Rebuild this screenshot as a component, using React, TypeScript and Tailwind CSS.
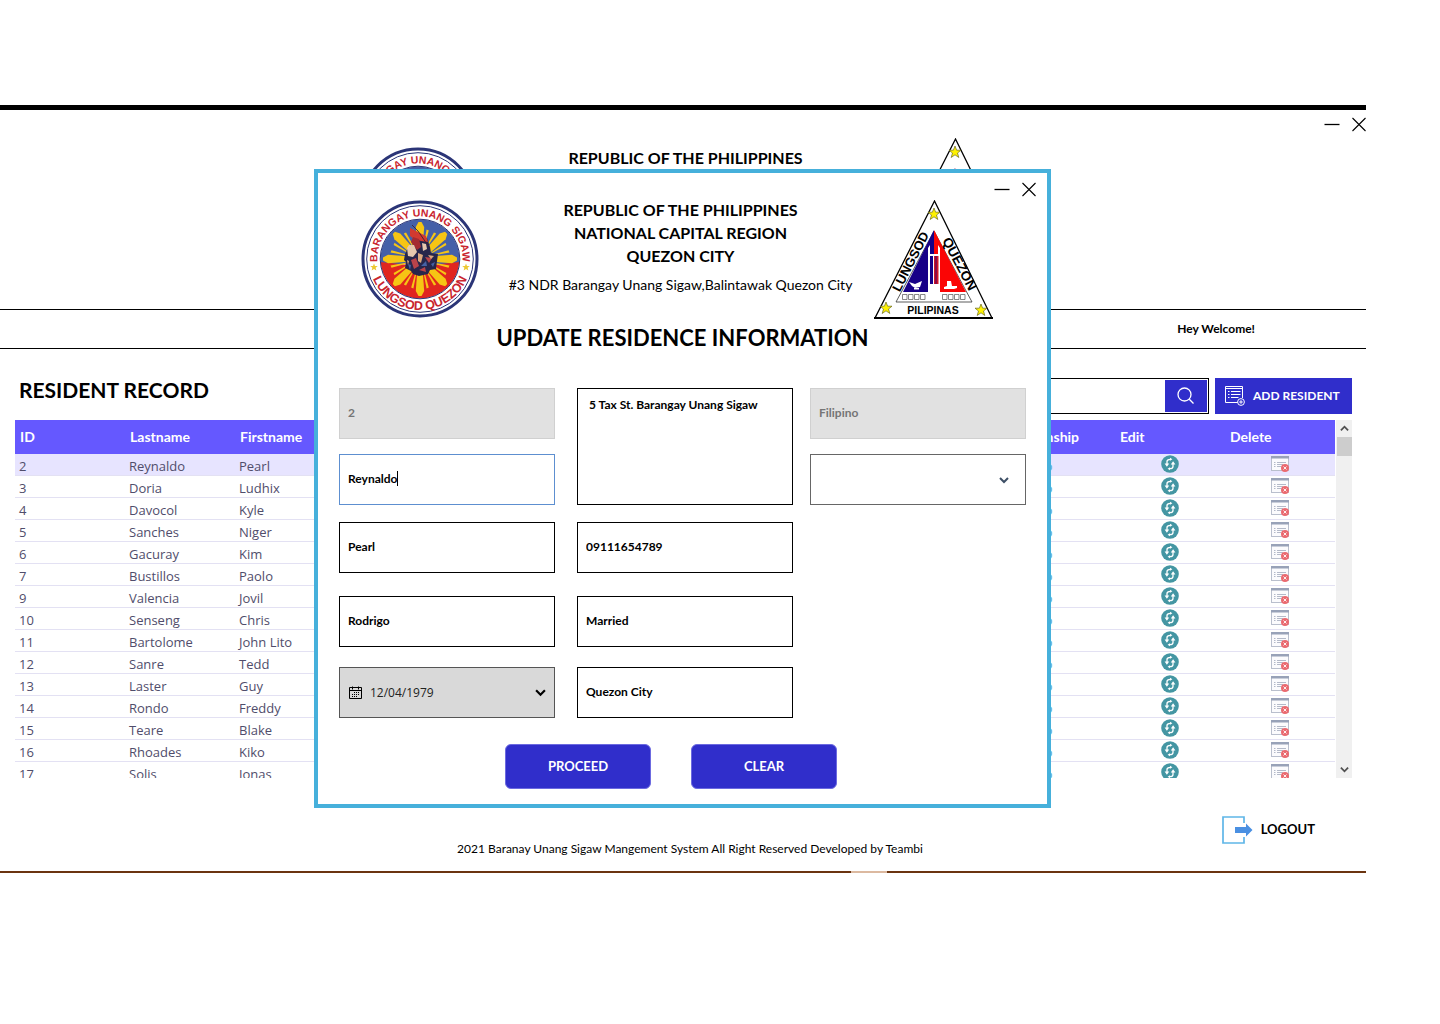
import { useState } from "react";

const residents = [
  ["2", "Reynaldo", "Pearl"],
  ["3", "Doria", "Ludhix"],
  ["4", "Davocol", "Kyle"],
  ["5", "Sanches", "Niger"],
  ["6", "Gacuray", "Kim"],
  ["7", "Bustillos", "Paolo"],
  ["9", "Valencia", "Jovil"],
  ["10", "Senseng", "Chris"],
  ["11", "Bartolome", "John Lito"],
  ["12", "Sanre", "Tedd"],
  ["13", "Laster", "Guy"],
  ["14", "Rondo", "Freddy"],
  ["15", "Teare", "Blake"],
  ["16", "Rhoades", "Kiko"],
  ["17", "Solis", "Jonas"],
];

function BarangaySeal({ id }: { id: string }) {
  const angles = [0, 45, 90, 135, 180, 225, 270, 315];
  return (
    <svg viewBox="0 0 118 118" className="size-[118px] shrink-0" role="img" aria-label="Barangay Unang Sigaw seal">
      <defs>
        <path id={`${id}-top`} d="M16.5 62 A42.6 42.6 0 1 1 101.5 62" />
        <path id={`${id}-bottom`} d="M8 59 A51 51 0 0 0 110 59" />
        <clipPath id={`${id}-clip`}>
          <circle cx="59" cy="59" r="39.5" />
        </clipPath>
      </defs>
      <circle cx="59" cy="59" r="57" fill="#fff" stroke="#2b3577" strokeWidth="3" />
      <circle cx="59" cy="59" r="53.3" fill="none" stroke="#2b3577" strokeWidth="1" />
      <g clipPath={`url(#${id}-clip)`}>
        <rect x="18" y="18" width="82" height="46" fill="#4560a8" />
        <path d="M18 62 L59 66 L100 62 V100 H18Z" fill="#e0251f" />
        {angles.map((a) => (
          <g key={a} transform={`rotate(${a} 59 59)`} fill="#f6c514">
            <path d="M56.5 50 L54.8 27 L57.5 22 H60.5 L63.2 27 L61.5 50Z" />
            <path d="M54.6 46 L50.2 30.5 L52.4 29.5 L55.6 46Z" />
            <path d="M63.4 46 L67.8 30.5 L65.6 29.5 L62.4 46Z" />
          </g>
        ))}
      </g>
      <circle cx="59" cy="59" r="39.8" fill="none" stroke="#2b3577" strokeWidth="1" />
      <path d="M47 48 L44 54 L43 60 L45 62 L44 68 L50 71 L52 74 L58 76 L67 74 L69 70 L75 69 L76 61 L77 54 L70 53 L69 47 L66 38 L58 40Z" fill="#27264b" />
      <path d="M49 28 L55 31 L61 34 L65 36 L67 42 L60 41 L53 39 L49 36Z" fill="#d23a30" />
      <path d="M51 25 L57 31 L68 47" stroke="#3c2036" strokeWidth="0.9" fill="none" />
      <path d="M50 42 L52 37 L58 39 L60 47 L56 50Z" fill="#a52c32" />
      <path d="M46 48 L48 45 L53 45 L56 52 L52 57 L47 56Z M61 43 L65 44 L66 49 L62 51Z" fill="#e6c9ae" />
      <path d="M50 60 L55 58 L58 66 L53 69Z M64 57 L71 58 L68 63Z M58 70 L64 67 L65 72Z" fill="#b8434a" />
      <path d="M57 53 L62 55 L60 63 L57 61Z M67 55 L73 56 L70 59Z M46 60 L48 61 L47 65Z" fill="#dba87d" />
      <path d="M47 64 L50 65 L49 70Z M60 66 L65 61 L66 66Z M70 64 L74 62 L72 67Z" fill="#4662a4" />
      <path d="M13 63.5 l1 2.6 h2.8 l-2.2 1.7 .8 2.7 -2.4 -1.6 -2.4 1.6 .8 -2.7 -2.2 -1.7 h2.8Z" fill="#edc832" />
      <path d="M105 63.5 l1 2.6 h2.8 l-2.2 1.7 .8 2.7 -2.4 -1.6 -2.4 1.6 .8 -2.7 -2.2 -1.7 h2.8Z" fill="#edc832" />
      <g fill="#c9252f" fontFamily="Liberation Sans, sans-serif" fontWeight="700" textAnchor="middle">
        <text fontSize="10.5">
          <textPath href={`#${id}-top`} startOffset="50%">BARANGAY UNANG SIGAW</textPath>
        </text>
        <text fontSize="12.5">
          <textPath href={`#${id}-bottom`} startOffset="50%">LUNGSOD QUEZON</textPath>
        </text>
      </g>
    </svg>
  );
}

function CitySeal() {
  const stars = [
    [60, 14],
    [12, 108],
    [107, 110],
  ];
  return (
    <svg viewBox="0 0 120 120" className="size-[120px] shrink-0" role="img" aria-label="Lungsod Quezon seal">
      <path d="M60.5 1 L1 118 H118Z" fill="#fff" stroke="#000" strokeWidth="1.3" />
      <path d="M0 118 H119" stroke="#000" strokeWidth="2" />
      <path d="M60 31 L22 102 H98Z" fill="#fff" stroke="#333" strokeWidth="0.8" />
      <path d="M60 30 L29 92 H60Z" fill="#170087" />
      <path d="M60 30 L92 92 H60Z" fill="#fb0505" />
      <path d="M54 92 V48 L56 45 V54 H64 V45 L66 48 V92Z" fill="#fff" />
      <path d="M56 56 H59 V84 H56Z" fill="#170087" />
      <path d="M60 56 H64.5 V84 H60Z" fill="#d41525" />
      <path d="M59.5 42 V53 M62 56 V84" stroke="#170087" strokeWidth="0.8" />
      <path d="M35 82 L41 84 L48 81 L46 87 L41 88 L38 86Z M40 88 h5 v1.5 h-5Z" fill="#fff" />
      <path d="M73 81 h4 l1 5 h5 v2 l-3 1 h-10 v-2 l3 -1Z" fill="#fff" />
      <g fill="none" stroke="#555" strokeWidth="0.7">
        <path d="M28.5 94.5 h4.5 v5 h-4.5Z M34.5 94.5 h4.5 v5 h-4.5Z M40.5 94.5 h4.5 v5 h-4.5Z M46.5 94.5 h4.5 v5 h-4.5Z" />
        <path d="M68.5 94.5 h4.5 v5 h-4.5Z M74.5 94.5 h4.5 v5 h-4.5Z M80.5 94.5 h4.5 v5 h-4.5Z M86.5 94.5 h4.5 v5 h-4.5Z" />
      </g>
      {stars.map(([x, y]) => (
        <path
          key={x}
          transform={`translate(${x} ${y})`}
          d="M0 -6 L1.6 -1.8 L6 -1.8 L2.5 1 L3.8 5.5 L0 2.8 L-3.8 5.5 L-2.5 1 L-6 -1.8 L-1.6 -1.8Z"
          fill="#fff200"
          stroke="#6b6b20"
          strokeWidth="0.7"
        />
      ))}
      <g fontFamily="Liberation Sans, sans-serif" fontWeight="700" textAnchor="middle">
        <text x="59" y="114" fontSize="10.5">PILIPINAS</text>
        <text transform="translate(40.5 63.5) rotate(-63)" fontSize="13">LUNGSOD</text>
        <text transform="translate(81.5 66) rotate(62)" fontSize="13.5">QUEZON</text>
      </g>
    </svg>
  );
}

function WindowControls() {
  return (
    <>
      <button type="button" aria-label="Minimize" className="flex h-4 w-4 items-center justify-center">
        <svg viewBox="0 0 16 16" className="size-4"><path d="M0.5 8.5 H15.5" stroke="#000" strokeWidth="1.3" /></svg>
      </button>
      <button type="button" aria-label="Close" className="flex h-4 w-4 items-center justify-center">
        <svg viewBox="0 0 16 16" className="size-4"><path d="M2.5 2 L15.5 15 M15.5 2 L2.5 15" stroke="#000" strokeWidth="1.1" /></svg>
      </button>
    </>
  );
}

function EditIcon() {
  return (
    <svg viewBox="0 0 18 18" className="size-[18px]">
      <circle cx="9" cy="9" r="8.8" fill="#4496a3" />
      <path d="M6 9 V6.5 C6 4.8 7.5 4.3 9.5 4.3 M12 9 V11.5 C12 13.2 10.5 13.7 8.5 13.7" fill="none" stroke="#fff" strokeWidth="1.3" />
      <path d="M3.6 8.6 H8.2 L5.9 11.8Z M9.8 9.4 H14.4 L12.1 6.2Z M9 2.8 L11.4 4.3 L9 5.8Z M9 15.2 L6.6 13.7 L9 12.2Z" fill="#fff" />
    </svg>
  );
}

function DeleteIcon() {
  return (
    <svg viewBox="0 0 19 18" className="h-[18px] w-[19px]">
      <rect x="0.5" y="1.5" width="17" height="14" fill="#fbfbfd" stroke="#b9bfcd" />
      <rect x="0" y="1" width="18" height="2.5" fill="#98a2b8" />
      <path d="M3 7.5 h1.5 M3 9.5 h1.5 M3 11.5 h1.5 M6 7.5 h9 M6 9.5 h6 M6 11.5 h4" stroke="#b4bac9" />
      <circle cx="14" cy="13" r="4" fill="#ea6a70" />
      <path d="M12.5 11.5 l3 3 M15.5 11.5 l-3 3" stroke="#fff" strokeWidth="0.9" />
    </svg>
  );
}

function Chevron({ up = false, className }: { up?: boolean; className: string }) {
  return (
    <svg viewBox="0 0 10 10" className={className} fill="none" stroke="currentColor" strokeWidth="2">
      <path d={up ? "M1 7 L5 3 L9 7" : "M1 3 L5 7 L9 3"} />
    </svg>
  );
}

const fieldClass = "h-[51px] w-full border border-black bg-white px-2 pb-0.5 text-xs font-bold outline-none";

function Field({ label, value, className = "" }: { label: string; value: string; className?: string }) {
  return <input aria-label={label} defaultValue={value} className={`${fieldClass} ${className}`} />;
}

function DisabledField({ label, value }: { label: string; value: string }) {
  return (
    <input
      aria-label={label}
      defaultValue={value}
      disabled
      className="h-[51px] w-full border border-[#d0d0d0] bg-[#e1e1e1] px-2 pb-0.5 text-xs font-bold text-[#757575]"
    />
  );
}

function UpdateDialog() {
  const [lastname, setLastname] = useState("Reynaldo");
  return (
    <section
      role="dialog"
      aria-label="Update residence information"
      className="absolute top-[59px] left-[calc(50%-369px)] w-[737px] border-4 border-[#46b0db] bg-white pb-[15px]"
    >
      <div className="flex h-6 items-end justify-end gap-[10px] pr-[11px]">
        <WindowControls />
      </div>
      <header className="mt-[3px] flex justify-between pr-[53px] pl-[43px]">
        <BarangaySeal id="dialog-seal" />
        <div className="-mt-0.5 ml-2 text-center">
          <div className="text-base leading-[23px] font-bold">
            <p>REPUBLIC OF THE PHILIPPINES</p>
            <p>NATIONAL CAPITAL REGION</p>
            <p>QUEZON CITY</p>
          </div>
          <p className="mt-2 text-sm leading-5">#3 NDR Barangay Unang Sigaw,Balintawak Quezon City</p>
        </div>
        <CitySeal />
      </header>
      <h2 className="mt-1 text-center text-[22px] leading-7 font-bold">UPDATE RESIDENCE INFORMATION</h2>

      <form onSubmit={(e) => e.preventDefault()}>
        <div className="mt-[36px] flex items-start px-[21px]">
          <div className="w-[216px]">
            <DisabledField label="ID" value="2" />
            <label className="mt-[15px] flex h-[51px] items-center border border-[#5d8fd0] pb-0.5 pl-2">
              <input
                aria-label="Lastname"
                value={lastname}
                onChange={(e) => setLastname(e.target.value)}
                className="text-xs font-bold caret-transparent outline-none [field-sizing:content]"
              />
              <span className="h-[15px] w-px bg-black" />
            </label>
            <Field label="Firstname" value="Pearl" className="mt-[17px]" />
            <Field label="Middlename" value="Rodrigo" className="mt-[23px]" />
            <label className="mt-5 flex h-[51px] items-center border border-[#555] bg-[#d9d9d9] pr-2 pl-[9px]">
              <svg viewBox="0 0 13 14" className="h-[14px] w-[13px] shrink-0" fill="none" stroke="#000">
                <path d="M0.5 1.5 h12 v11 h-12Z M0.5 4.5 h12 M3.5 0.5 v3 M9.5 0.5 v3" />
                <path d="M5 6.5 h1 M7 6.5 h1 M9 6.5 h1 M3 8.5 h1 M5 8.5 h1 M7 8.5 h1 M9 8.5 h1 M3 10.5 h1 M5 10.5 h1 M7 10.5 h1" />
              </svg>
              <input
                aria-label="Birthdate"
                defaultValue="12/04/1979"
                className="ml-2 min-w-0 flex-1 bg-transparent font-['Open_Sans',sans-serif] text-xs text-[#222] outline-none"
              />
              <Chevron className="size-[11px] text-black" />
            </label>
          </div>
          <div className="ml-[22px] w-[216px]">
            <textarea
              aria-label="Address"
              defaultValue="5 Tax St. Barangay Unang Sigaw"
              className="block h-[117px] w-full resize-none border border-black px-[11px] py-2 text-xs leading-4 font-bold outline-none"
            />
            <Field label="Contact number" value="09111654789" className="mt-[17px]" />
            <Field label="Civil status" value="Married" className="mt-[23px]" />
            <Field label="Birthplace" value="Quezon City" className="mt-5" />
          </div>
          <div className="ml-[17px] w-[216px]">
            <DisabledField label="Citizenship" value="Filipino" />
            <div className="relative mt-[15px]">
              <select aria-label="Gender" className="block h-[51px] w-full appearance-none border border-[#666] bg-white px-2 text-xs font-bold outline-none">
                <option value="" aria-label="None" />
              </select>
              <Chevron className="pointer-events-none absolute top-[21px] right-[17px] size-[10px] text-[#3d4f66]" />
            </div>
          </div>
        </div>
        <div className="mt-[26px] flex gap-10 pl-[187px]">
          <button type="submit" className="h-[45px] w-[146px] rounded-md border border-[#6c6ae0] bg-[#302ecb] text-[13px] font-bold text-white">
            PROCEED
          </button>
          <button type="reset" className="h-[45px] w-[146px] rounded-md border border-[#6c6ae0] bg-[#302ecb] text-[13px] font-bold text-white">
            CLEAR
          </button>
        </div>
      </form>
    </section>
  );
}

export default function App() {
  return (
    <div className="bg-white pt-[105px] pr-[74px] pb-[151px] font-[Lato,sans-serif] text-black">
      <main className="relative border-t-[5px] border-black">
        <div className="flex h-[22px] items-end justify-end gap-[10px]">
          <WindowControls />
        </div>
        <header className="flex h-[177px] items-start justify-center gap-[91px] pt-[6px] pl-[7px]">
          <div className="pt-[9px]"><BarangaySeal id="page-seal" /></div>
          <p className="w-[236px] pt-2 text-center text-base leading-[23px] font-bold whitespace-nowrap">REPUBLIC OF THE PHILIPPINES</p>
          <CitySeal />
        </header>
        <div className="flex h-10 items-center justify-end border-y border-black pr-[111px] text-xs font-bold">
          <p>Hey Welcome!</p>
        </div>

        <div className="mt-[29px] flex h-9 items-stretch justify-between pr-[14px] pl-[19px]">
          <h1 className="text-[21px] leading-6 font-bold">RESIDENT RECORD</h1>
          <div className="flex gap-[6px]">
            <div className="flex w-80 border border-black p-px">
              <input aria-label="Search residents" className="min-w-0 flex-1 px-2 text-xs outline-none" />
              <button type="button" aria-label="Search" className="flex w-[42px] items-center justify-center bg-[#302ecb]">
                <svg viewBox="0 0 18 18" className="size-[18px]" fill="none" stroke="#fff" strokeWidth="1.3">
                  <circle cx="7.5" cy="7.5" r="6.5" />
                  <path d="M12.3 12.3 L16.5 16.5" />
                </svg>
              </button>
            </div>
            <button type="button" className="flex w-[137px] items-center bg-[#302ecb] pl-[10px] text-xs font-bold whitespace-nowrap text-white">
              <svg viewBox="0 0 20 20" className="mr-2 size-5 shrink-0" fill="none" stroke="#fff">
                <path d="M13 16.5 H0.5 V0.5 H17.5 V12 M0.5 2.5 H17.5 M3 5.5 h1.5 M3 8.5 h1.5 M3 11.5 h1.5 M6 5.5 h9.5 M6 8.5 h9.5 M6 11.5 h7.5" />
                <circle cx="16" cy="16" r="3.4" fill="#302ecb" />
                <path d="M14.2 16 h3.6 M16 14.2 v3.6" />
              </svg>
              ADD RESIDENT
            </button>
          </div>
        </div>

        <div className="mt-[6px] flex h-[358px] overflow-hidden pr-[14px] pl-[15px]">
          <div className="min-w-0 flex-1 overflow-hidden">
            <table className="w-full table-fixed border-separate border-spacing-0 text-left">
              <thead>
                <tr className="h-[34px] bg-[#6558ff] text-sm text-white">
                  <th className="p-0 pl-[5px]">ID</th>
                  <th className="p-0 pl-[5px]">Lastname</th>
                  <th className="p-0 pl-[5px]">Firstname</th>
                  <td colSpan={6} />
                  <th className="p-0 pl-[5px]">Citizenship</th>
                  <th className="p-0 pl-[5px]">Edit</th>
                  <th className="p-0 pl-[5px]">Delete</th>
                </tr>
              </thead>
              <tbody className="font-['Open_Sans',sans-serif] text-[13px] text-[#504d6b] [&_td]:border-b [&_td]:border-[#e3e1f3]">
                {residents.map(([id, last, first], i) => (
                  <tr key={id} className={i === 0 ? "h-[22px] bg-[#e7e4ff]" : "h-[22px]"}>
                    <td className="p-0 pt-[3px] pl-1 leading-[18px]">{id}</td>
                    <td className="p-0 pt-[3px] pl-1 leading-[18px]">{last}</td>
                    <td className="p-0 pt-[3px] pl-1 leading-[18px]">{first}</td>
                    <td colSpan={6} />
                    <td className="p-0 pt-[3px] pl-1 leading-[18px] text-[#5aa9d6]">Filipino</td>
                    <td className="p-0 pb-px">
                      <button type="button" aria-label={`Edit ${first} ${last}`} className="mx-auto block"><EditIcon /></button>
                    </td>
                    <td className="p-0 pb-px">
                      <button type="button" aria-label={`Delete ${first} ${last}`} className="mx-auto block"><DeleteIcon /></button>
                    </td>
                  </tr>
                ))}
              </tbody>
            </table>
          </div>
          <div className="ml-px flex w-4 flex-col items-center bg-[#f0f0f0] text-[#505050]">
            <button type="button" aria-label="Scroll up" className="flex h-[17px] w-full items-center justify-center"><Chevron up className="size-[9px]" /></button>
            <div className="h-[19px] w-[15px] bg-[#cdcdcd]" />
            <button type="button" aria-label="Scroll down" className="mt-auto flex h-[17px] w-full items-center justify-center"><Chevron className="size-[9px]" /></button>
          </div>
        </div>

        <div className="mt-[38px] flex justify-end pr-[51px]">
          <button type="button" className="flex items-center gap-2 text-[13px] font-bold">
            <svg viewBox="0 0 31 28" className="h-7 w-[31px]">
              <path d="M22 7 V1 H1 V27 H22 V21" fill="none" stroke="#5fb6e8" strokeWidth="1.7" />
              <path d="M13 11 H24 V7.5 L30.5 14 L24 20.5 V17 H13Z" fill="#4a90e2" />
            </svg>
            LOGOUT
          </button>
        </div>
        <footer className="-mt-1 pl-[14px]">
          <p className="text-center text-xs leading-[18px]">2021 Baranay Unang Sigaw Mangement System All Right Reserved Developed by Teambi</p>
        </footer>
        <div className="mt-[13px] flex h-0.5 justify-end bg-[#6b3410] pr-[479px]">
          <div className="w-9 bg-[#dcb9a0]" />
        </div>
        <UpdateDialog />
      </main>
    </div>
  );
}
